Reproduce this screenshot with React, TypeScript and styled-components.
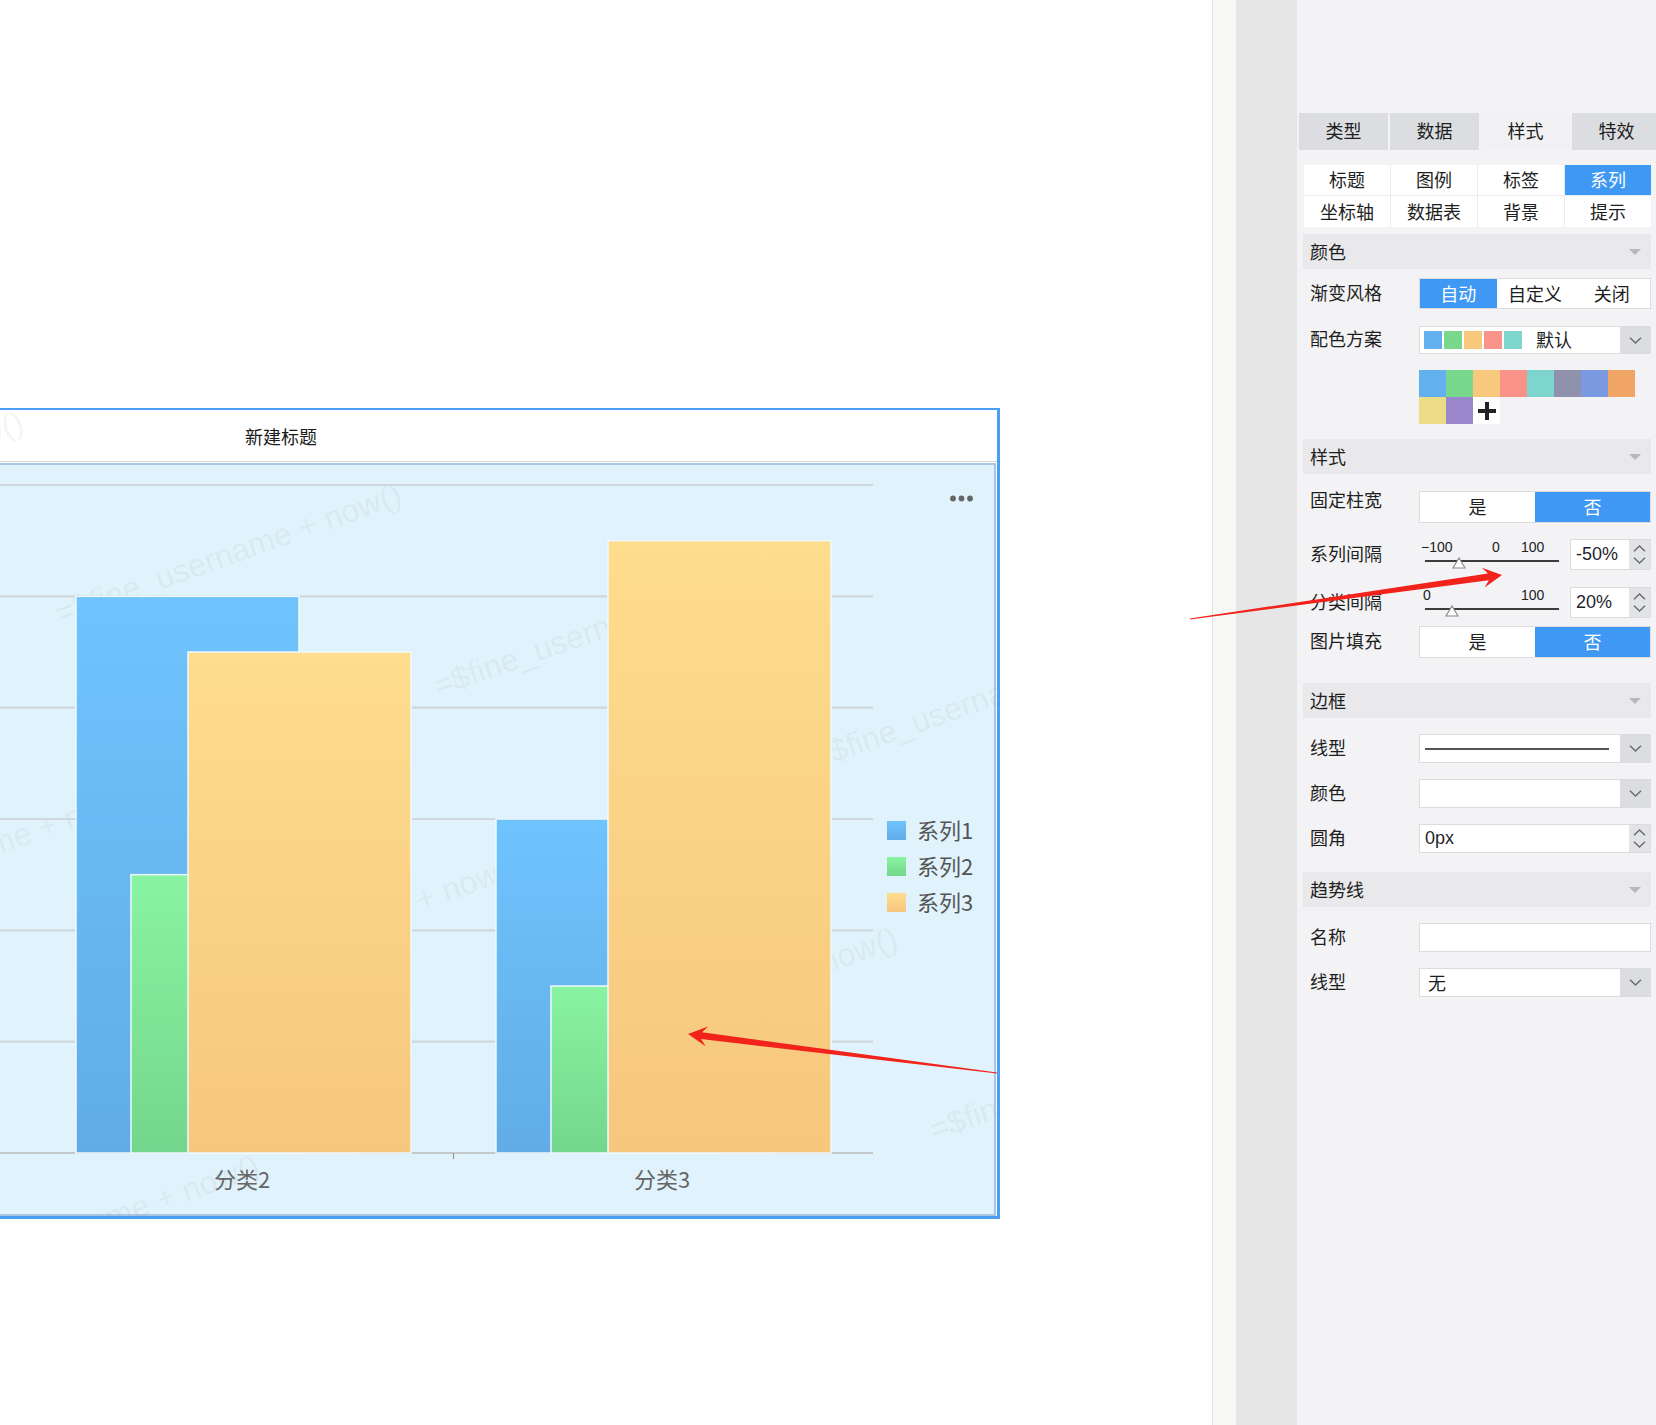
import React from "react";
import styled, { createGlobalStyle } from "styled-components";

const CJK = `"Noto Sans CJK SC", "Noto Sans", sans-serif`;
const LATIN = `"Liberation Sans", "Noto Sans CJK SC", sans-serif`;
const BLUE = "#3e98f4";

const GlobalStyle = createGlobalStyle`
  html, body { margin: 0; padding: 0; background: #fff; }
  body { font-family: ${CJK}; color: #1e1e1e; }
  * { box-sizing: border-box; }
`;

/* ---------- page frame ---------- */
const Page = styled.div`
  position: relative;
  width: 1656px;
  height: 1425px;
  display: flex;
  overflow: hidden;
`;
const Canvas = styled.div`
  position: relative;
  width: 1212px;
  flex: none;
  background: #fff;
  overflow: hidden;
`;
const EdgeLine = styled.div`
  width: 1px;
  flex: none;
  background: #e8e5d6;
`;
const OffStrip = styled.div`
  width: 23px;
  flex: none;
  background: #f8f8f6;
`;
const GrayColumn = styled.div`
  width: 61px;
  flex: none;
  background: #e6e6e6;
`;

/* ---------- chart widget ---------- */
const WIDGET_LEFT = -437;
const WIDGET_W = 1437;

const Widget = styled.div`
  position: absolute;
  left: ${WIDGET_LEFT}px;
  top: 408px;
  width: ${WIDGET_W}px;
  height: 811px;
  border-style: solid;
  border-color: #4a9ff5;
  border-width: 2px 3px 3px 2px;
  background: #fff;
  display: flex;
  flex-direction: column;
  font-family: ${CJK};
`;
const TitleBar = styled.div`
  height: 52px;
  flex: none;
  border-bottom: 1px solid #d6d6d6;
  display: flex;
  align-items: center;
  justify-content: center;
  background: #fff;
  font-size: 18px;
  color: #1a1a1a;
`;
const TitleText = styled.span`
  position: relative;
  z-index: 2;
`;
const Body = styled.div`
  margin-top: 1px;
  margin-right: 1px;
  flex: 1;
  border: 2px solid #a9c6e1;
  background: #e0f3fc;
`;
const PlotSvg = styled.svg`
  position: relative;
  z-index: 2;
  display: block;
`;
const WatermarkSvg = styled.svg`
  position: absolute;
  left: 0;
  top: 0;
  z-index: 1;
  pointer-events: none;
`;
const ArrowLayer = styled.svg`
  position: absolute;
  left: 0;
  top: 0;
  z-index: 10;
  pointer-events: none;
`;

/* ---------- side panel ---------- */
const Panel = styled.div`
  flex: 1;
  min-width: 0;
  background: #f3f3f5;
  padding-top: 113px;
  display: flex;
  flex-direction: column;
  overflow: hidden;
  font-family: ${CJK};
  font-size: 18px;
  color: #1e1e1e;
`;
const TopTabs = styled.div`
  display: flex;
  gap: 2px;
  margin-left: 2px;
  height: 37px;
  flex: none;
`;
const TopTab = styled.div<{ $active?: boolean }>`
  width: 89px;
  flex: none;
  display: flex;
  align-items: center;
  justify-content: center;
  padding-bottom: 3px;
  background: ${(p) => (p.$active ? "#f1f1f3" : "#dcdde1")};
`;
const PanelBody = styled.div`
  padding: 0 5px 0 6px;
  display: flex;
  flex-direction: column;
`;
const SubTabs = styled.div`
  margin: 15px 0 0 1px;
  display: grid;
  grid-template-columns: repeat(4, 86px);
  grid-template-rows: 30px 31px;
  gap: 1px;
  background: #ececee;
`;
const SubTab = styled.div<{ $active?: boolean }>`
  display: flex;
  align-items: center;
  justify-content: center;
  padding-bottom: 2px;
  background: ${(p) => (p.$active ? BLUE : "#fff")};
  color: ${(p) => (p.$active ? "#fff" : "#1e1e1e")};
`;
const SectionHeader = styled.div<{ $mt: number }>`
  margin-top: ${(p) => p.$mt}px;
  height: 35px;
  flex: none;
  background: #e9e9eb;
  display: flex;
  align-items: center;
  justify-content: space-between;
  padding: 0 10px 2px 7px;
`;
const Caret = styled.span`
  width: 0;
  height: 0;
  margin-top: 2px;
  border-left: 6px solid transparent;
  border-right: 6px solid transparent;
  border-top: 6px solid #b8b8ba;
`;
const Row = styled.div<{ $mt: number; $h: number }>`
  margin-top: ${(p) => p.$mt}px;
  height: ${(p) => p.$h}px;
  flex: none;
  display: flex;
  align-items: center;
`;
const Label = styled.div<{ $raise?: number }>`
  width: 116px;
  flex: none;
  padding-left: 7px;
  position: relative;
  top: ${(p) => -(p.$raise || 0) - 2}px;
  white-space: nowrap;
`;
const SegGroup = styled.div<{ $cols: number }>`
  width: 232px;
  height: 100%;
  display: grid;
  grid-template-columns: repeat(${(p) => p.$cols}, 1fr);
  border: 1px solid #dcdcdc;
  background: #fff;
`;
const SegItem = styled.div<{ $active?: boolean }>`
  display: flex;
  align-items: center;
  justify-content: center;
  padding-bottom: 2px;
  background: ${(p) => (p.$active ? BLUE : "#fff")};
  color: ${(p) => (p.$active ? "#fff" : "#1e1e1e")};
`;
const SelectBox = styled.div<{ $w?: number }>`
  width: ${(p) => p.$w ?? 232}px;
  height: 100%;
  display: flex;
  border: 1px solid #dcdcdc;
  background: #fff;
`;
const SelectValue = styled.div<{ $pl?: number }>`
  flex: 1;
  min-width: 0;
  display: flex;
  align-items: center;
  padding-left: ${(p) => p.$pl ?? 5}px;
`;
const ArrowCell = styled.div`
  width: 30px;
  flex: none;
  background: #dcdde0;
  display: flex;
  align-items: center;
  justify-content: center;
`;
const SpinCell = styled.div`
  width: 21px;
  flex: none;
  background: #e2e3e6;
  display: flex;
  flex-direction: column;
  align-items: center;
  justify-content: center;
  gap: 5px;
`;
const NumText = styled.span`
  font-family: ${LATIN};
  font-size: 18px;
  color: #1f1f2e;
`;
const LineSample = styled.div`
  flex: 1;
  height: 2px;
  background: #555;
  margin-right: 11px;
`;
const Swatches = styled.div`
  display: flex;
  gap: 2px;
`;
const Swatch = styled.span<{ $c: string }>`
  width: 18px;
  height: 18px;
  background: ${(p) => p.$c};
`;
const SchemeName = styled.span`
  margin-left: 14px;
  margin-bottom: 2px;
`;
const PlainText = styled.span`
  margin-bottom: 2px;
`;
const PaletteGrid = styled.div`
  margin: 16px 0 0 116px;
  display: grid;
  grid-template-columns: repeat(8, 27px);
  grid-auto-rows: 27px;
`;
const PaletteCell = styled.div<{ $c: string }>`
  background: ${(p) => p.$c};
  display: flex;
  align-items: center;
  justify-content: center;
`;
const Controls = styled.div`
  display: flex;
  align-items: center;
  gap: 11px;
  height: 100%;
`;
const SliderBox = styled.div`
  position: relative;
  width: 140px;
  height: 100%;
`;
const SliderMark = styled.span`
  position: absolute;
  top: 0;
  font-family: ${LATIN};
  font-size: 14px;
  line-height: 16px;
  color: #222;
`;
const SliderTrack = styled.div`
  position: absolute;
  left: 6px;
  right: 0;
  top: 21px;
  height: 2px;
  background: #3c3c3c;
`;
const SliderThumb = styled.svg`
  position: absolute;
  top: 18px;
`;

/* ---------- small drawings ---------- */
const Chevron = ({ up = false }: { up?: boolean }) => (
  <svg width="13" height="7" viewBox="0 0 13 7">
    <polyline
      points={up ? "1,6.3 6.5,1 12,6.3" : "1,0.7 6.5,6 12,0.7"}
      fill="none"
      stroke="#6a6a6a"
      strokeWidth="1.4"
    />
  </svg>
);

const Spinner = () => (
  <SpinCell>
    <Chevron up />
    <Chevron />
  </SpinCell>
);

const Slider = ({
  marks,
  ratio,
}: {
  marks: { text: string; left: number }[];
  ratio: number;
}) => (
  <SliderBox>
    {marks.map((m) => (
      <SliderMark key={m.text} style={{ left: m.left }}>
        {m.text}
      </SliderMark>
    ))}
    <SliderTrack />
    <SliderThumb
      width="14"
      height="12"
      viewBox="0 0 14 12"
      style={{ left: 6 + ratio * 134 - 7 }}
    >
      <polygon points="7,1 13,11 1,11" fill="#fff" stroke="#8a8a8a" strokeWidth="1.2" />
    </SliderThumb>
  </SliderBox>
);

const NumberInput = ({ value, w }: { value: string; w: number }) => (
  <SelectBox $w={w}>
    <SelectValue $pl={5}>
      <NumText>{value}</NumText>
    </SelectValue>
    <Spinner />
  </SelectBox>
);

const Select = ({ children, pl }: { children?: React.ReactNode; pl?: number }) => (
  <SelectBox>
    <SelectValue $pl={pl}>{children}</SelectValue>
    <ArrowCell>
      <Chevron />
    </ArrowCell>
  </SelectBox>
);

/* ---------- chart data (page coordinates) ---------- */
const AXIS_Y = 1153;
const UNIT = (1153 - 485) / 6;
const BAR_W = 223;
const OFFSETS = [0, 55, 112];
const SERIES = [
  { name: "系列1", grad: "gBlue" },
  { name: "系列2", grad: "gGreen" },
  { name: "系列3", grad: "gYellow" },
];
const CATEGORIES = [
  { label: "分类1", x: -344, values: [4, 2, 3.5] },
  { label: "分类2", x: 76, values: [5, 2.5, 4.5] },
  { label: "分类3", x: 496, values: [3, 1.5, 5.5] },
];
const BODY_X = WIDGET_LEFT + 4;
const BODY_Y = 465;

const WATERMARK = "=$fine_username + now()";

function arrowPolygon(
  tail: [number, number],
  tip: [number, number],
  headLen = 19,
  headHalf = 10,
  shaftHalf = 3.4,
  tailHalf = 0.5
) {
  const dx = tip[0] - tail[0];
  const dy = tip[1] - tail[1];
  const L = Math.hypot(dx, dy);
  const ux = dx / L;
  const uy = dy / L;
  const nx = -uy;
  const ny = ux;
  const base = [tip[0] - ux * headLen * 0.72, tip[1] - uy * headLen * 0.72];
  const barb = [tip[0] - ux * headLen, tip[1] - uy * headLen];
  const pts = [
    [tail[0] + nx * tailHalf, tail[1] + ny * tailHalf],
    [base[0] + nx * shaftHalf, base[1] + ny * shaftHalf],
    [barb[0] + nx * headHalf, barb[1] + ny * headHalf],
    tip,
    [barb[0] - nx * headHalf, barb[1] - ny * headHalf],
    [base[0] - nx * shaftHalf, base[1] - ny * shaftHalf],
    [tail[0] - nx * tailHalf, tail[1] - ny * tailHalf],
  ];
  return pts.map((p) => `${p[0].toFixed(1)},${p[1].toFixed(1)}`).join(" ");
}

const Watermarks = () => {
  const items: { x: number; y: number }[] = [];
  for (let i = -3; i <= 4; i++) {
    for (let j = -2; j <= 3; j++) {
      items.push({ x: 60 + i * 378 - j * 260, y: 625 + i * 72 + j * 300 });
    }
  }
  return (
    <WatermarkSvg width={WIDGET_W - 5} height="806">
      <g transform={`translate(${-(WIDGET_LEFT + 2)},-410)`}>
        {items.map((p, k) => (
          <text
            key={k}
            x={p.x}
            y={p.y}
            transform={`rotate(-19.5 ${p.x} ${p.y})`}
            fontFamily="Liberation Sans, sans-serif"
            fontSize="32"
            fill="rgba(140,140,140,0.10)"
          >
            {WATERMARK}
          </text>
        ))}
      </g>
    </WatermarkSvg>
  );
};

const Plot = () => (
  <PlotSvg width={WIDGET_W - 10} height="749">
    <defs>
      <linearGradient id="gBlue" x1="0" y1="0" x2="0" y2="1">
        <stop offset="0" stopColor="#6fc4fd" />
        <stop offset="1" stopColor="#61ace7" />
      </linearGradient>
      <linearGradient id="gGreen" x1="0" y1="0" x2="0" y2="1">
        <stop offset="0" stopColor="#88f4a2" />
        <stop offset="1" stopColor="#74d68c" />
      </linearGradient>
      <linearGradient id="gYellow" x1="0" y1="0" x2="0" y2="1">
        <stop offset="0" stopColor="#fedd8d" />
        <stop offset="1" stopColor="#f6c77d" />
      </linearGradient>
    </defs>
    <g transform={`translate(${-BODY_X},${-BODY_Y})`}>
      {[0, 1, 2, 3, 4, 5].map((k) => (
        <line
          key={k}
          x1={-420}
          x2={873}
          y1={485 + k * UNIT}
          y2={485 + k * UNIT}
          stroke="#d1d8dc"
          strokeWidth="2.2"
        />
      ))}
      <line x1={-420} x2={873} y1={AXIS_Y} y2={AXIS_Y} stroke="#c5c8ca" strokeWidth="2.2" />
      <line x1={453.5} x2={453.5} y1={AXIS_Y} y2={AXIS_Y + 6} stroke="#999" strokeWidth="1.2" />

      {CATEGORIES.map((c) => (
        <g key={c.label}>
          {c.values.map((v, s) => (
            <rect
              key={s}
              x={c.x + OFFSETS[s]}
              y={AXIS_Y - v * UNIT}
              width={BAR_W}
              height={v * UNIT}
              fill={`url(#${SERIES[s].grad})`}
              stroke="#eef9ff"
              strokeWidth="1.5"
            />
          ))}
          <text
            x={c.x + 166}
            y={1188}
            textAnchor="middle"
            fontFamily={CJK}
            fontSize="22"
            fill="#666"
          >
            {c.label}
          </text>
        </g>
      ))}

      {SERIES.map((s, i) => (
        <g key={s.name}>
          <rect x={887} y={821 + i * 36} width={19} height={19} fill={`url(#${s.grad})`} />
          <text x={917} y={838.5 + i * 36} fontFamily={CJK} fontSize="22" fill="#555">
            {s.name}
          </text>
        </g>
      ))}

      {[953, 961.5, 970].map((cx) => (
        <circle key={cx} cx={cx} cy={498.5} r={2.9} fill="#666" />
      ))}
    </g>
  </PlotSvg>
);

const SUB_TABS = ["标题", "图例", "标签", "系列", "坐标轴", "数据表", "背景", "提示"];
const SCHEME = ["#64b0ee", "#78d98e", "#f8c87c", "#f9948a", "#7dd5ce"];
const PALETTE = [
  "#63b0ee",
  "#78d98e",
  "#f8c97d",
  "#f9938a",
  "#7dd5ce",
  "#8f91ad",
  "#7a99e0",
  "#f0a566",
  "#ecdc86",
  "#9b88cc",
];

export default function App() {
  return (
    <>
      <GlobalStyle />
      <Page>
        <Canvas>
          <Widget>
            <Watermarks />
            <TitleBar>
              <TitleText>新建标题</TitleText>
            </TitleBar>
            <Body>
              <Plot />
            </Body>
          </Widget>
        </Canvas>
        <EdgeLine />
        <OffStrip />
        <GrayColumn />
        <Panel>
          <TopTabs>
            {["类型", "数据", "样式", "特效"].map((t, i) => (
              <TopTab key={t} $active={i === 2}>
                {t}
              </TopTab>
            ))}
          </TopTabs>
          <PanelBody>
            <SubTabs>
              {SUB_TABS.map((t) => (
                <SubTab key={t} $active={t === "系列"}>
                  {t}
                </SubTab>
              ))}
            </SubTabs>

            <SectionHeader $mt={7}>
              <span>颜色</span>
              <Caret />
            </SectionHeader>
            <Row $mt={9} $h={31}>
              <Label>渐变风格</Label>
              <SegGroup $cols={3}>
                <SegItem $active>自动</SegItem>
                <SegItem>自定义</SegItem>
                <SegItem>关闭</SegItem>
              </SegGroup>
            </Row>
            <Row $mt={17} $h={28}>
              <Label>配色方案</Label>
              <Select pl={4}>
                <Swatches>
                  {SCHEME.map((c) => (
                    <Swatch key={c} $c={c} />
                  ))}
                </Swatches>
                <SchemeName>默认</SchemeName>
              </Select>
            </Row>
            <PaletteGrid>
              {PALETTE.map((c) => (
                <PaletteCell key={c} $c={c} />
              ))}
              <PaletteCell $c="#fff">
                <svg width="20" height="20" viewBox="0 0 20 20">
                  <rect x="8" y="1" width="4" height="18" fill="#222" />
                  <rect x="1" y="8" width="18" height="4" fill="#222" />
                </svg>
              </PaletteCell>
            </PaletteGrid>

            <SectionHeader $mt={15}>
              <span>样式</span>
              <Caret />
            </SectionHeader>
            <Row $mt={17} $h={32}>
              <Label $raise={6}>固定柱宽</Label>
              <SegGroup $cols={2}>
                <SegItem>是</SegItem>
                <SegItem $active>否</SegItem>
              </SegGroup>
            </Row>
            <Row $mt={16} $h={31}>
              <Label>系列间隔</Label>
              <Controls>
                <Slider
                  marks={[
                    { text: "−100", left: 2 },
                    { text: "0", left: 73 },
                    { text: "100", left: 102 },
                  ]}
                  ratio={0.25}
                />
                <NumberInput value="-50%" w={81} />
              </Controls>
            </Row>
            <Row $mt={17} $h={31}>
              <Label>分类间隔</Label>
              <Controls>
                <Slider
                  marks={[
                    { text: "0", left: 4 },
                    { text: "100", left: 102 },
                  ]}
                  ratio={0.2}
                />
                <NumberInput value="20%" w={81} />
              </Controls>
            </Row>
            <Row $mt={8} $h={32}>
              <Label>图片填充</Label>
              <SegGroup $cols={2}>
                <SegItem>是</SegItem>
                <SegItem $active>否</SegItem>
              </SegGroup>
            </Row>

            <SectionHeader $mt={25}>
              <span>边框</span>
              <Caret />
            </SectionHeader>
            <Row $mt={16} $h={29}>
              <Label>线型</Label>
              <Select pl={5}>
                <LineSample />
              </Select>
            </Row>
            <Row $mt={16} $h={29}>
              <Label>颜色</Label>
              <Select />
            </Row>
            <Row $mt={16} $h={29}>
              <Label>圆角</Label>
              <NumberInput value="0px" w={232} />
            </Row>

            <SectionHeader $mt={19}>
              <span>趋势线</span>
              <Caret />
            </SectionHeader>
            <Row $mt={16} $h={29}>
              <Label>名称</Label>
              <SelectBox />
            </Row>
            <Row $mt={16} $h={29}>
              <Label>线型</Label>
              <Select pl={8}>
                <PlainText>无</PlainText>
              </Select>
            </Row>
          </PanelBody>
        </Panel>

        <ArrowLayer width="1656" height="1425">
          <polygon points={arrowPolygon([997, 1073], [688, 1034])} fill="#f2231b" />
          <polygon points={arrowPolygon([1190, 619], [1502, 575])} fill="#f2231b" />
        </ArrowLayer>
      </Page>
    </>
  );
}
